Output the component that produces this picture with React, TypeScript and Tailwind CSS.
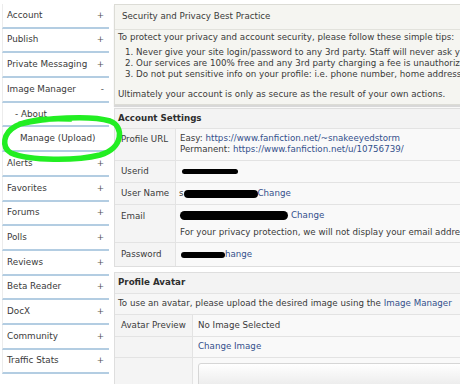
import React from "react";

// sidebar menu entries
const menu: { label: string; sign?: string; sub?: boolean }[] = [
    { label: "Account", sign: "+" },
    { label: "Publish", sign: "+" },
    { label: "Private Messaging", sign: "+" },
    { label: "Image Manager", sign: "-" },
    { label: "- About", sub: true },
    { label: "Manage (Upload)", sub: true },
    { label: "Alerts", sign: "+" },
    { label: "Favorites", sign: "+" },
    { label: "Forums", sign: "+" },
    { label: "Polls", sign: "+" },
    { label: "Reviews", sign: "+" },
    { label: "Beta Reader", sign: "+" },
    { label: "DocX", sign: "+" },
    { label: "Community", sign: "+" },
    { label: "Traffic Stats", sign: "+" },
];

const Blob = ({ w, h = 7 }: { w: number; h?: number }) => (
    <span className="inline-block bg-black rounded-full align-middle" style={{ width: w, height: h }} />
);

const Link = ({ children }: { children: React.ReactNode }) => (
    <span className="text-[#34508c]">{children}</span>
);

export default function App() {
    return (
        <div
            className="relative w-[460px] h-[384px] overflow-hidden bg-white flex text-[8.7px] text-[#3a3a3a]"
            style={{ fontFamily: '"DejaVu Sans", Verdana, sans-serif' }}
        >
            {/* sidebar */}
            <div className="w-[109px] shrink-0 pt-[4px] pl-[2px] text-[8.8px]">
                {menu.map((m) => (
                    <div
                        key={m.label}
                        className="h-[24.7px] box-border flex items-center justify-between border-b-2 border-[#b3cde2] border-l border-l-[#ececec] bg-white"
                    >
                        <span className={m.sub ? (m.label.startsWith("-") ? "pl-[12px]" : "pl-[17px]") : "pl-[4px]"}>{m.label}</span>
                        {m.sign && <span className="pr-[5px] text-[#555]">{m.sign}</span>}
                    </div>
                ))}
            </div>

            {/* main */}
            <div className="ml-[5px] pt-[4px] w-[420px] shrink-0 whitespace-nowrap">
                {/* best practice */}
                <div className="border border-[#dcdcd6] bg-[#f5f5f1] shadow-[0_2px_1px_#d8d8d8]">
                    <div className="h-[25px] flex items-center pl-[7px] border-b border-[#e2e2dc]">Security and Privacy Best Practice</div>
                    <div className="pl-[3px] pt-[2px] pb-[4px] leading-[11px]">
                        <div>To protect your privacy and account security, please follow these simple tips:</div>
                        <div className="pl-[7px] mt-[4px]">
                            <div>1. Never give your site login/password to any 3rd party. Staff will never ask you for it.</div>
                            <div>2. Our services are 100% free and any 3rd party charging a fee is unauthorized.</div>
                            <div>3. Do not put sensitive info on your profile: i.e. phone number, home address.</div>
                        </div>
                        <div className="mt-[9px]">Ultimately your account is only as secure as the result of your own actions.</div>
                    </div>
                </div>

                {/* account settings */}
                <div className="mt-[3px] border border-[#dedede] bg-[#f3f3f3]">
                    <div className="h-[19px] flex items-center pl-[3px] font-bold text-[#2e2e2e]">Account Settings</div>
                    <div className="grid grid-cols-[61px_1fr] bg-[#f9f9f9]">
                        <div className="pl-[6px] pt-[4px] h-[32px] border-t border-r border-[#e3e3e3] bg-[#f4f4f4]">Profile URL</div>
                        <div className="pl-[4px] pt-[4px] leading-[11px] border-t border-[#e3e3e3]">
                            <div>Easy: <Link>https://www.fanfiction.net/~snakeeyedstorm</Link></div>
                            <div>Permanent: <Link>https://www.fanfiction.net/u/10756739/</Link></div>
                        </div>
                        <div className="pl-[6px] h-[22px] flex items-center border-t border-r border-[#e3e3e3] bg-[#f4f4f4]">Userid</div>
                        <div className="pl-[6px] flex items-center border-t border-[#e3e3e3]"><Blob w={56} h={5} /></div>
                        <div className="pl-[6px] h-[22px] flex items-center border-t border-r border-[#e3e3e3] bg-[#f4f4f4]">User Name</div>
                        <div className="pl-[3px] flex items-center border-t border-[#e3e3e3]">s<Blob w={74} h={8} /><Link>Change</Link></div>
                        <div className="pl-[6px] pt-[5px] h-[38px] border-t border-r border-[#e3e3e3] bg-[#f4f4f4]">Email</div>
                        <div className="pl-[4px] border-t border-[#e3e3e3] leading-[11px]">
                            <div className="pt-[5px] flex items-center"><Blob w={108} h={9} /><span className="ml-[3px]"><Link>Change</Link></span></div>
                            <div className="mt-[6px]">For your privacy protection, we will not display your email address.</div>
                        </div>
                        <div className="pl-[6px] h-[24px] flex items-center border-t border-r border-[#e3e3e3] bg-[#f4f4f4]">Password</div>
                        <div className="pl-[5px] flex items-center border-t border-[#e3e3e3]"><Blob w={44} h={6} /><Link>hange</Link></div>
                    </div>
                </div>

                {/* profile avatar */}
                <div className="mt-[5px] border border-[#dedede] bg-[#f3f3f3]">
                    <div className="h-[20px] flex items-center pl-[3px] font-bold text-[#2e2e2e]">Profile Avatar</div>
                    <div className="h-[21px] flex items-center pl-[3px] border-t border-[#e3e3e3] bg-[#f6f6f6]">
                        To use an avatar, please upload the desired image using the&nbsp;<Link>Image Manager</Link>
                    </div>
                    <div className="grid grid-cols-[78px_1fr] bg-[#f9f9f9]">
                        <div className="pl-[6px] h-[22px] flex items-center border-t border-r border-[#e3e3e3] bg-[#f4f4f4]">Avatar Preview</div>
                        <div className="pl-[5px] flex items-center border-t border-[#e3e3e3]">No Image Selected</div>
                        <div className="h-[21px] border-t border-r border-[#e3e3e3] bg-[#f4f4f4]" />
                        <div className="pl-[5px] flex items-center border-t border-[#e3e3e3]"><Link>Change Image</Link></div>
                        <div className="h-[40px] border-t border-r border-[#e3e3e3] bg-[#f4f4f4]" />
                        <div className="pl-[5px] pt-[5px] border-t border-[#e3e3e3]">
                            <div className="h-[30px] rounded-[3px] border border-[#d6d6d6] bg-gradient-to-b from-white to-[#e6e6e6]" />
                        </div>
                    </div>
                </div>
            </div>

            {/* hand-drawn highlight */}
            <svg className="absolute left-0 top-0 pointer-events-none" width="130" height="170" viewBox="0 0 130 170">
                <path
                    d="M20 124 C45 118, 90 115, 110 121 C124 126, 124 148, 100 155 C76 161, 30 161, 11 153 C1 147, 3 133, 16 126 C30 119, 50 118, 70 119"
                    fill="none"
                    stroke="#22ee22"
                    strokeWidth="5.5"
                    strokeLinecap="round"
                />
            </svg>
        </div>
    );
}
